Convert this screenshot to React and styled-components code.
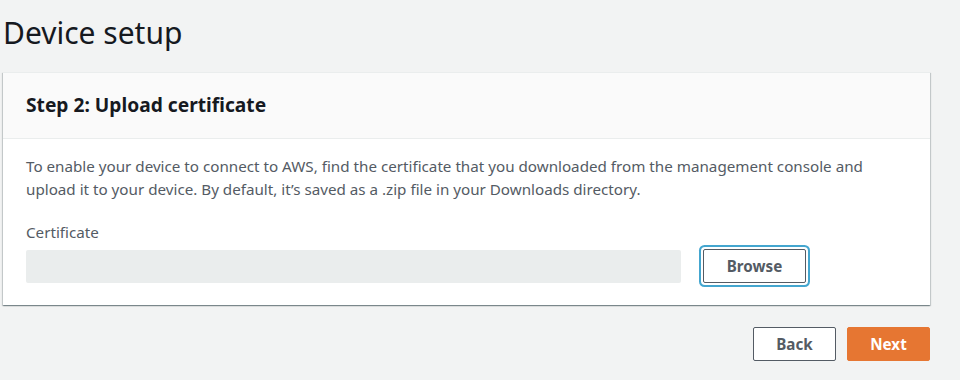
import React from "react"
import styled, { createGlobalStyle } from "styled-components"

const GlobalStyle = createGlobalStyle`
  html, body {
    margin: 0;
    padding: 0;
    background: #f2f3f3;
    font-family: "Noto Sans", "Open Sans", sans-serif;
    color: #16191f;
  }
`

const Page = styled.div`
  width: 960px;
  height: 380px;
  padding: 0 30px 0 3px;
  box-sizing: border-box;
  display: flex;
  flex-direction: column;
`
const Title = styled.h1`
  margin: 14px 0 0 0;
  font-size: 30px;
  line-height: 38px;
  font-weight: 400;
  color: #16191f;
`
const Card = styled.section`
  margin-top: 20px;
  background: #fff;
  box-shadow: 0 1px 1px 0 rgba(0, 28, 36, 0.3), 1px 1px 1px 0 rgba(0, 28, 36, 0.15),
    -1px 1px 1px 0 rgba(0, 28, 36, 0.15);
  border-top: 1px solid #eaeded;
`
const CardHeader = styled.header`
  background: #fafafa;
  border-bottom: 1px solid #eaeded;
  padding: 19px 23px 20px;
`
const CardTitle = styled.h2`
  margin: 0;
  font-size: 19.2px;
  line-height: 26px;
  font-weight: 700;
  color: #16191f;
`
const CardBody = styled.div`
  padding: 16px 23px 22px;
`
const Text = styled.p`
  margin: 0;
  max-width: 850px;
  font-size: 15.2px;
  line-height: 23px;
  color: #545b64;
`
const Label = styled.div`
  margin-top: 20px;
  font-size: 15.2px;
  line-height: 22px;
  color: #545b64;
`
const FieldRow = styled.div`
  margin-top: 6px;
  display: flex;
  align-items: center;
  gap: 22px;
`
const FileBox = styled.div`
  width: 655px;
  height: 33px;
  background: #eaeded;
  border-radius: 2px;
`
const Button = styled.button`
  height: 34px;
  padding: 0 18px;
  border-radius: 2px;
  font-family: inherit;
  font-size: 15.2px;
  font-weight: 700;
  cursor: pointer;
  background: ${p => (p.$primary ? "#e67632" : "#fff")};
  color: ${p => (p.$primary ? "#fff" : "#545b64")};
  border: 1px solid ${p => (p.$primary ? "#e67632" : "#545b64")};
  width: ${p => p.$width || "auto"};
  box-shadow: ${p => (p.$focused ? "0 0 0 2px #fff, 0 0 0 4px #44a6cf" : "none")};
`
const Actions = styled.div`
  margin-top: 22px;
  display: flex;
  justify-content: flex-end;
  gap: 11px;
`

export default function App() {
  return (
    <>
      <GlobalStyle />
      <Page>
        <Title>Device setup</Title>
        <Card>
          <CardHeader>
            <CardTitle>Step 2: Upload certificate</CardTitle>
          </CardHeader>
          <CardBody>
            <Text>
              To enable your device to connect to AWS, find the certificate that you downloaded from the
              management console and upload it to your device. By default, it’s saved as a .zip file in
              your Downloads directory.
            </Text>
            <Label>Certificate</Label>
            <FieldRow>
              <FileBox />
              <Button $focused $width="103px">Browse</Button>
            </FieldRow>
          </CardBody>
        </Card>
        <Actions>
          <Button $width="83px">Back</Button>
          <Button $primary $width="83px">Next</Button>
        </Actions>
      </Page>
    </>
  )
}
